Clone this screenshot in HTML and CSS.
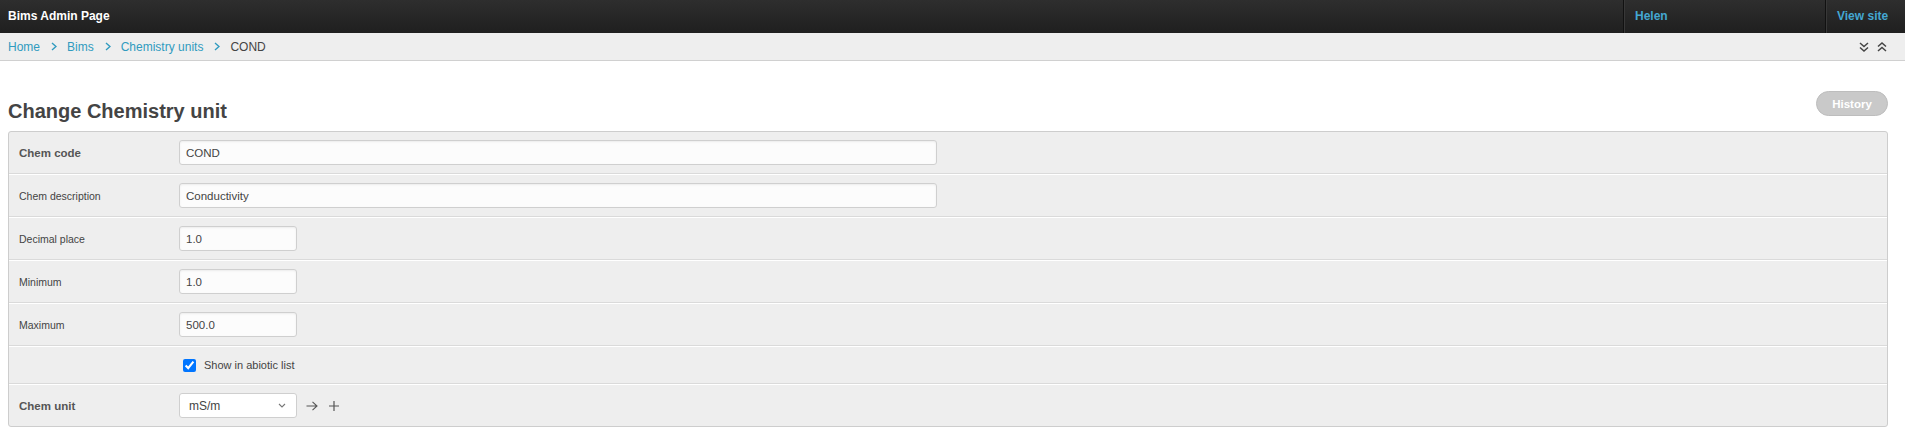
FILE: index.html
```html
<!DOCTYPE html>
<html lang="en">
<head>
<meta charset="utf-8">
<title>Change Chemistry unit | Bims Admin Page</title>
<link rel="stylesheet" href="styles.css">
</head>
<body>
<header class="topbar">
  <div class="brand">Bims Admin Page</div>
  <nav class="user-tools">
    <a class="tool tool-user" href="#">Helen</a>
    <a class="tool tool-site" href="#">View site</a>
  </nav>
</header>
<div class="breadcrumbs">
  <div class="crumbs">
    <a href="#">Home</a>
    <svg class="sep" viewBox="0 0 6 9" width="6" height="9"><polyline points="1,1 5,4.5 1,8" fill="none" stroke="#309bbf" stroke-width="1.4"/></svg>
    <a href="#">Bims</a>
    <svg class="sep" viewBox="0 0 6 9" width="6" height="9"><polyline points="1,1 5,4.5 1,8" fill="none" stroke="#309bbf" stroke-width="1.4"/></svg>
    <a href="#">Chemistry units</a>
    <svg class="sep" viewBox="0 0 6 9" width="6" height="9"><polyline points="1,1 5,4.5 1,8" fill="none" stroke="#309bbf" stroke-width="1.4"/></svg>
    <span class="current">COND</span>
  </div>
  <div class="collapse-tools">
    <svg viewBox="0 0 10 10" width="10" height="10"><polyline points="1,1 5,4.5 9,1" fill="none" stroke="#444" stroke-width="1.5"/><polyline points="1,5.5 5,9 9,5.5" fill="none" stroke="#444" stroke-width="1.5"/></svg>
    <svg viewBox="0 0 10 10" width="10" height="10"><polyline points="1,4.5 5,1 9,4.5" fill="none" stroke="#444" stroke-width="1.5"/><polyline points="1,9 5,5.5 9,9" fill="none" stroke="#444" stroke-width="1.5"/></svg>
  </div>
</div>
<main class="content">
  <div class="page-head">
    <h1>Change Chemistry unit</h1>
    <a class="history" href="#">History</a>
  </div>
  <form class="form-box">
    <div class="row">
      <label class="label required">Chem code</label>
      <input class="input wide" type="text" value="COND">
    </div>
    <div class="row">
      <label class="label">Chem description</label>
      <input class="input wide" type="text" value="Conductivity">
    </div>
    <div class="row">
      <label class="label">Decimal place</label>
      <input class="input narrow" type="text" value="1.0">
    </div>
    <div class="row">
      <label class="label">Minimum</label>
      <input class="input narrow" type="text" value="1.0">
    </div>
    <div class="row">
      <label class="label">Maximum</label>
      <input class="input narrow" type="text" value="500.0">
    </div>
    <div class="row row-check">
      <span class="label"></span>
      <label class="check-field"><input type="checkbox" checked><span>Show in abiotic list</span></label>
    </div>
    <div class="row">
      <label class="label required">Chem unit</label>
      <span class="select-wrap">
        <select class="select"><option>mS/m</option></select>
        <svg class="select-caret" viewBox="0 0 8 5" width="8" height="5"><polyline points="1,1 4,4 7,1" fill="none" stroke="#777" stroke-width="1.1"/></svg>
      </span>
      <svg class="rel-icon arrow" viewBox="0 0 12 10" width="12" height="10"><path d="M0.5 5 H11 M6.5 0.8 L11 5 L6.5 9.2" fill="none" stroke="#555" stroke-width="1.1"/></svg>
      <svg class="rel-icon plus" viewBox="0 0 10 10" width="10" height="10"><path d="M5 0 V10 M0 5 H10" fill="none" stroke="#555" stroke-width="1.2"/></svg>
    </div>
  </form>
</main>
</body>
</html>
```
FILE: styles.css
```css
html, body {
  margin: 0;
  padding: 0;
  background: #fff;
  font-family: "Liberation Sans", Arial, sans-serif;
  color: #444;
}

a { text-decoration: none; }

.topbar {
  display: flex;
  height: 33px;
  background: linear-gradient(#2e2e2e, #1f1f1f);
}

.brand {
  flex: 1;
  padding-left: 8px;
  line-height: 33px;
  font-size: 12px;
  font-weight: bold;
  color: #fff;
}

.user-tools { display: flex; }

.tool {
  display: block;
  line-height: 33px;
  font-size: 12px;
  font-weight: bold;
  color: #44a7d2;
  padding-left: 11px;
  border-left: 1px solid #111;
  box-shadow: inset 1px 0 0 #383838;
  box-sizing: border-box;
}

.tool-user { width: 202px; }
.tool-site { width: 80px; }

.breadcrumbs {
  display: flex;
  align-items: center;
  justify-content: space-between;
  height: 27px;
  padding: 0 18px 0 8px;
  background: #eee;
  border-bottom: 1px solid #d0d0d0;
  font-size: 12px;
}

.crumbs { display: flex; align-items: center; }
.crumbs a { color: #309bbf; }
.crumbs .sep { margin: 0 10px 0 11px; display: block; }
.crumbs .current { color: #444; }

.collapse-tools { display: flex; gap: 8px; }
.collapse-tools svg { display: block; }

.content { padding: 0 17px 0 8px; }

.page-head {
  display: flex;
  justify-content: space-between;
  align-items: flex-end;
  margin-top: 30px;
  margin-bottom: 8px;
}

.page-head h1 {
  margin: 0;
  font-size: 20px;
  line-height: 24px;
  font-weight: bold;
  color: #444;
}

.history {
  display: flex;
  align-items: center;
  justify-content: center;
  width: 72px;
  height: 25px;
  box-sizing: border-box;
  margin-bottom: 7px;
  border: 1px solid #bdbdbd;
  border-radius: 13px;
  background: #c9c9c9;
  color: #fff;
  font-size: 11.5px;
  font-weight: bold;
}

.form-box {
  margin: 0;
  border: 1px solid #cdcdcd;
  border-radius: 3px;
  background: #eee;
}

.row {
  display: flex;
  align-items: center;
  padding: 8px 10px;
  border-top: 1px solid #fff;
  border-bottom: 1px solid #dadada;
}

.row:first-child { border-top: 0; }
.row:last-child { border-bottom: 0; }

.label {
  width: 160px;
  flex-shrink: 0;
  font-size: 10.5px;
  color: #444;
}

.label.required {
  font-size: 11.5px;
  font-weight: bold;
  color: #555;
}

.input {
  height: 25px;
  box-sizing: border-box;
  margin: 0;
  padding: 0 6px;
  border: 1px solid #cfcfcf;
  border-radius: 3px;
  background: #fcfcfc;
  box-shadow: inset 0 1px 2px #ececec;
  font-family: "Liberation Sans", Arial, sans-serif;
  font-size: 11.5px;
  color: #444;
}

.input.wide { width: 758px; }
.input.narrow { width: 118px; }

.row-check .check-field {
  display: flex;
  align-items: center;
  height: 20px;
  font-size: 11px;
  color: #444;
}

.check-field input {
  width: 13px;
  height: 13px;
  margin: 0 8px 0 4px;
}

.select-wrap {
  position: relative;
  display: block;
  width: 118px;
  height: 25px;
}

.select {
  -webkit-appearance: none;
  appearance: none;
  width: 118px;
  height: 25px;
  box-sizing: border-box;
  margin: 0;
  padding: 0 0 0 9px;
  border: 1px solid #cfcfcf;
  border-radius: 3px;
  background: #fff;
  font-family: "Liberation Sans", Arial, sans-serif;
  font-size: 12px;
  color: #444;
}

.select-caret {
  position: absolute;
  right: 11px;
  top: 10px;
}

.rel-icon { display: block; }
.rel-icon.arrow { margin-left: 9px; }
.rel-icon.plus { margin-left: 11px; }
```
